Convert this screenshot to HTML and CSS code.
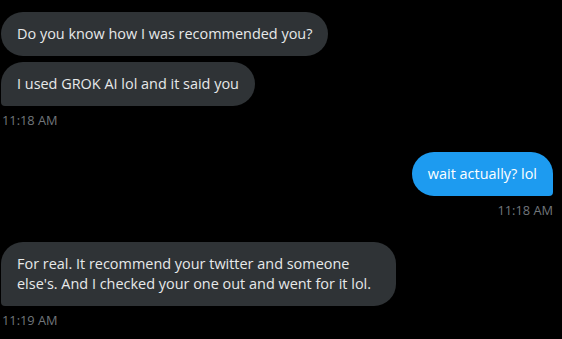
FILE: index.html
```html
<!DOCTYPE html>
<html>
<head>
<meta charset="utf-8">
<link rel="stylesheet" href="styles.css">
</head>
<body>
<div class="chat">
  <div class="group in">
    <div class="bubble first">Do you know how I was recommended you?</div>
    <div class="bubble last">I used GROK AI lol and it said you</div>
    <div class="time">11:18 AM</div>
  </div>
  <div class="group out">
    <div class="bubble last">wait actually? lol</div>
    <div class="time">11:18 AM</div>
  </div>
  <div class="group in">
    <div class="bubble last wide">For real. It recommend your twitter and someone else's. And I checked your one out and went for it lol.</div>
    <div class="time">11:19 AM</div>
  </div>
</div>
</body>
</html>
```
FILE: styles.css
```css
html, body {
  margin: 0;
  padding: 0;
  background: #000;
}
body {
  font-family: "Open Sans", "Noto Sans", sans-serif;
  width: 562px;
  height: 339px;
  overflow: hidden;
}
.chat {
  display: flex;
  flex-direction: column;
  gap: 24px;
  padding: 12px 9px 0 1px;
}
.group {
  display: flex;
  flex-direction: column;
  gap: 6px;
}
.group.in { align-items: flex-start; }
.group.out { align-items: flex-end; }
.bubble {
  font-size: 14.45px;
  line-height: 20px;
  color: #e7e9ea;
  padding: 12px 16px;
  border-radius: 22px;
  max-width: 363px;
}
.in .bubble { background: #2f3336; }
.out .bubble { background: #1d9bf0; color: #fff; }
.in .bubble.last { border-bottom-left-radius: 4px; }
.out .bubble.last { border-bottom-right-radius: 4px; }
.time {
  font-size: 12.8px;
  line-height: 16px;
  color: #71767b;
  padding-left: 1px;
}
```
